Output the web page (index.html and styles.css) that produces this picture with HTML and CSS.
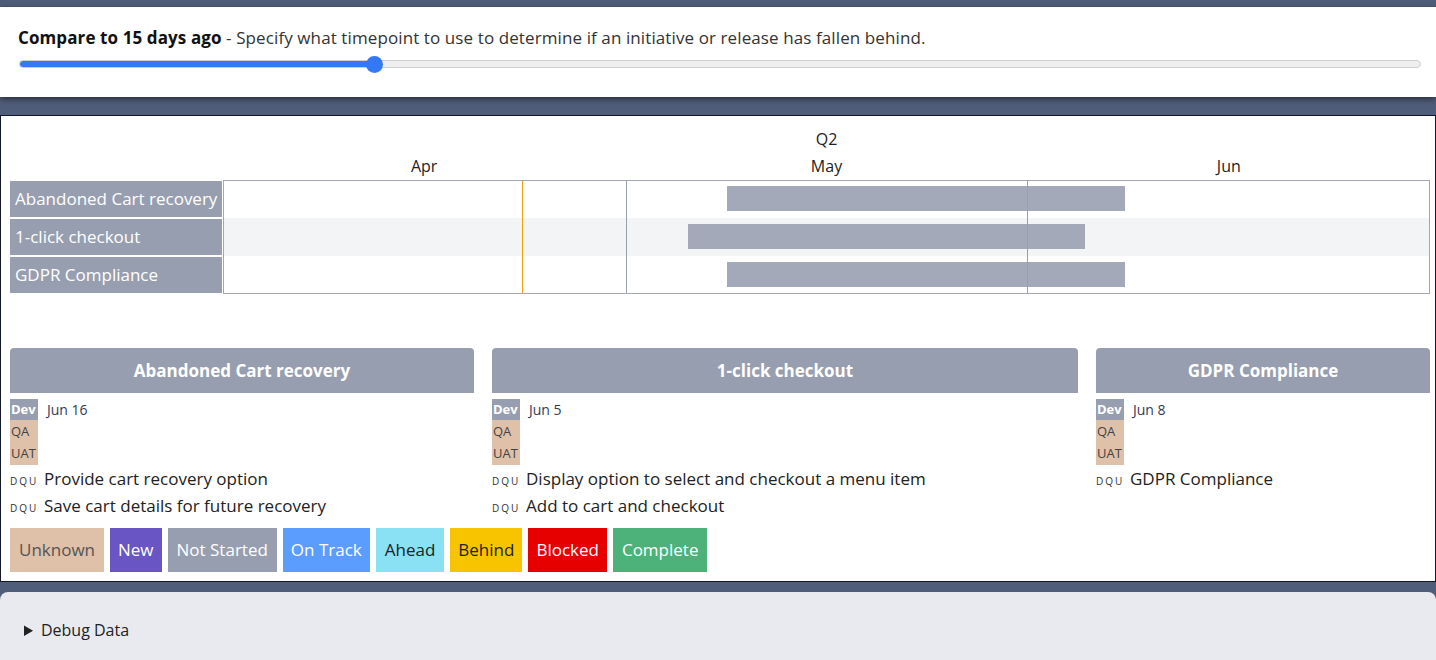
FILE: index.html
```html
<!DOCTYPE html>
<html>
<head>
<meta charset="utf-8">
<link rel="stylesheet" href="styles.css">
</head>
<body>
<section class="panel top-panel">
  <div class="compare-text"><b>Compare to 15 days ago</b> - Specify what timepoint to use to determine if an initiative or release has fallen behind.</div>
  <input class="slider" type="range" min="0" max="60" value="15">
</section>

<section class="panel main-panel">
  <div class="gantt">
    <div class="gantt-head">
      <div class="quarter">Q2</div>
      <div class="months"><span>Apr</span><span>May</span><span>Jun</span></div>
    </div>
    <div class="gantt-body">
      <div class="labels">
        <div class="label">Abandoned Cart recovery</div>
        <div class="label">1-click checkout</div>
        <div class="label">GDPR Compliance</div>
      </div>
      <div class="tracks">
        <div class="track first"><div class="bar" style="margin-left:41.708%;width:33.085%"></div></div>
        <div class="track alt"><div class="bar" style="margin-left:38.474%;width:33.002%"></div></div>
        <div class="track last"><div class="bar" style="margin-left:41.708%;width:33.085%"></div></div>
        <div class="vline today" style="left:24.75%"></div>
        <div class="vline" style="left:33.333%"></div>
        <div class="vline" style="left:66.667%"></div>
      </div>
    </div>
  </div>

  <div class="cards">
    <div class="card">
      <div class="card-head">Abandoned Cart recovery</div>
      <div class="phases">
        <div class="phase-tags"><span class="tag dev">Dev</span><span class="tag qa">QA</span><span class="tag qa">UAT</span></div>
        <div class="date">Jun 16</div>
      </div>
      <div class="item"><span class="dqu">DQU</span>Provide cart recovery option</div>
      <div class="item"><span class="dqu">DQU</span>Save cart details for future recovery</div>
    </div>
    <div class="card">
      <div class="card-head">1-click checkout</div>
      <div class="phases">
        <div class="phase-tags"><span class="tag dev">Dev</span><span class="tag qa">QA</span><span class="tag qa">UAT</span></div>
        <div class="date">Jun 5</div>
      </div>
      <div class="item"><span class="dqu">DQU</span>Display option to select and checkout a menu item</div>
      <div class="item"><span class="dqu">DQU</span>Add to cart and checkout</div>
    </div>
    <div class="card">
      <div class="card-head">GDPR Compliance</div>
      <div class="phases">
        <div class="phase-tags"><span class="tag dev">Dev</span><span class="tag qa">QA</span><span class="tag qa">UAT</span></div>
        <div class="date">Jun 8</div>
      </div>
      <div class="item"><span class="dqu">DQU</span>GDPR Compliance</div>
    </div>
  </div>

  <div class="legend">
    <span class="lg unknown">Unknown</span>
    <span class="lg new">New</span>
    <span class="lg notstarted">Not Started</span>
    <span class="lg ontrack">On Track</span>
    <span class="lg ahead">Ahead</span>
    <span class="lg behind">Behind</span>
    <span class="lg blocked">Blocked</span>
    <span class="lg complete">Complete</span>
  </div>
</section>

<details class="panel debug">
  <summary>Debug Data</summary>
</details>
</body>
</html>
```

FILE: styles.css
```css
* { box-sizing: border-box; }
html, body { height: 100%; }
body {
  margin: 0;
  background: #505d7a;
  font-family: "Open Sans", "Noto Sans", sans-serif;
  color: #222;
  overflow: hidden;
}
.top-panel {
  margin-top: 7px;
  height: 90px;
  background: #fff;
  box-shadow: 0 2px 6px rgba(0,0,0,0.55);
  padding: 19px 15px 0 18px;
}
.compare-text {
  font-size: 17px;
  line-height: 24px;
  color: #333;
  letter-spacing: 0.1px;
}
.compare-text b { color: #111; }
.slider {
  -webkit-appearance: none;
  appearance: none;
  display: block;
  margin: 10px 0 0 1px;
  width: 1402px;
  height: 8px;
  border-radius: 4px;
  border: 1px solid #cfcfcf;
  background: linear-gradient(to right, #3478f6 0, #3478f6 25.3%, #efefef 25.3%, #efefef 100%);
  outline: none;
}
.slider::-webkit-slider-thumb {
  -webkit-appearance: none;
  width: 17px;
  height: 17px;
  border-radius: 50%;
  background: #3478f6;
  border: none;
}
.main-panel {
  margin-top: 18px;
  background: #fff;
  border: 1px solid #121826;
  height: 467px;
  padding: 0 5px 0 9px;
}
.gantt-head { margin-left: 213px; }
.quarter {
  text-align: center;
  font-size: 16px;
  line-height: 22px;
  padding-top: 12px;
  color: #222;
}
.months {
  display: grid;
  grid-template-columns: 1fr 1fr 1fr;
  font-size: 16px;
  line-height: 22px;
  padding-top: 5px;
  padding-bottom: 3px;
  color: #222;
}
.months span { text-align: center; }
.gantt-body {
  display: grid;
  grid-template-columns: 213px 1fr;
}
.labels {
  display: flex;
  flex-direction: column;
  padding-top: 1px;
}
.label {
  height: 38px;
  background: #979eaf;
  color: #fff;
  font-size: 17px;
  line-height: 36px;
  padding-left: 5px;
  border-top: 1px solid #fff;
  border-bottom: 1px solid #fff;
  margin-right: 1px;
  white-space: nowrap;
}
.labels .label:first-child { border-top: none; height: 37px; }
.labels .label:last-child { border-bottom: none; height: 37px; }
.tracks {
  position: relative;
  border: 1px solid #a3a7b0;
}
.track {
  height: 38px;
  display: flex;
  align-items: flex-start;
  padding-top: 6px;
}
.track.first { height: 37px; padding-top: 5px; }
.track.last { height: 37px; }
.track.alt { background: #f3f4f6; }
.bar {
  height: 25px;
  background: #a3a9b8;
}
.vline {
  position: absolute;
  top: 0;
  bottom: 0;
  width: 1px;
  background: #9aa0ab;
}
.vline.today { background: #eea20c; }
.cards {
  margin-top: 54px;
  display: grid;
  grid-template-columns: 464fr 586fr 334fr;
  column-gap: 18px;
}
.card-head {
  height: 45px;
  background: #979eaf;
  color: #fff;
  font-weight: 700;
  font-size: 17px;
  display: flex;
  align-items: center;
  justify-content: center;
  border-radius: 4px 4px 0 0;
}
.phases {
  display: flex;
  margin-top: 6px;
}
.phase-tags {
  display: flex;
  flex-direction: column;
  width: 28px;
}
.tag {
  display: block;
  font-size: 13px;
  height: 22px;
  line-height: 22px;
  padding-left: 1px;
}
.tag.dev {
  background: #979eaf;
  color: #fff;
  font-weight: 700;
  height: 21px;
  line-height: 21px;
}
.tag.qa { background: #dfc0a8; color: #444; height: 22px; }
.tag.qa:last-child { height: 23px; }
.date {
  margin-left: 9px;
  font-size: 14px;
  line-height: 21px;
  color: #2f3b58;
}
.item {
  font-size: 17px;
  line-height: 27px;
  height: 27px;
  color: #222;
  white-space: nowrap;
}
.dqu {
  display: inline-block;
  font-size: 10px;
  line-height: 10px;
  letter-spacing: 2px;
  color: #333;
  width: 34px;
}
.legend {
  display: flex;
  gap: 6px;
  margin-top: 9px;
}
.lg {
  height: 44px;
  line-height: 44px;
  padding: 0 9px;
  font-size: 17px;
}
.unknown { background: #dfc0a8; color: #555; }
.new { background: #6a55c4; color: #fff; padding: 0 8px; }
.notstarted { background: #979eaf; color: #fff; }
.ontrack { background: #5b9cff; color: #fff; padding: 0 8px; }
.ahead { background: #89e1f3; color: #222; }
.behind { background: #f8c400; color: #222; padding: 0 8px; }
.blocked { background: #e60000; color: #fff; padding: 0 8px; }
.complete { background: #4cb27a; color: #fff; }
.debug {
  margin-top: 10px;
  background: #e8eaef;
  border-radius: 8px 8px 0 0;
  height: 80px;
  padding: 27px 24px;
  font-size: 16px;
  color: #222;
}
.debug summary { cursor: pointer; }
```
